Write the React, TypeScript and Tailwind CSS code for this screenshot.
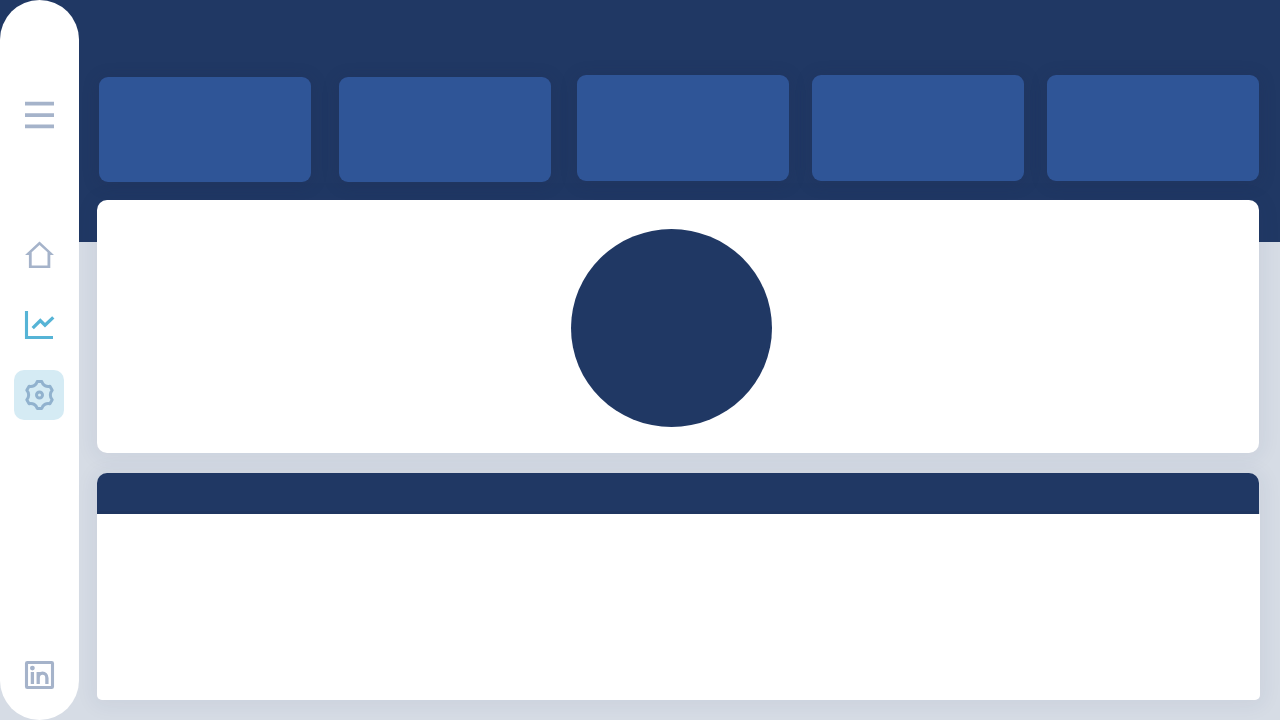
import type { ReactNode } from "react";

function NavButton({ label, className = "", children }: { label: string; className?: string; children: ReactNode }) {
  return (
    <button type="button" aria-label={label} className={`size-[50px] rounded-[10px] p-2.5 ${className}`}>
      <svg viewBox="0 0 30 30" className="block size-full overflow-visible" fill="none" aria-hidden="true">
        {children}
      </svg>
    </button>
  );
}

function Sidebar() {
  return (
    <nav className="flex w-[79px] shrink-0 flex-col rounded-[40px] bg-white pt-[90px] pb-5 pl-3.5 text-[#a5b3ca]">
      <NavButton label="Menu">
        <path d="M1 3.6h29M1 15.1h29M1 26.4h29" stroke="currentColor" strokeWidth="3.6" />
      </NavButton>
      <div className="mt-[90px] flex flex-col gap-5">
        <NavButton label="Home">
          <path
            fill="currentColor"
            fillRule="evenodd"
            d="M15.5 1.6 30 15H26.3V28.1H4.9V15H1ZM15.5 5.1 7.7 12.3V25.4H23.5V12.3Z"
          />
        </NavButton>
        <NavButton label="Analytics" className="text-[#56b4d6]">
          <path d="M2.5 1v26.5H29" stroke="currentColor" strokeWidth="3.1" />
          <path d="M8.7 18.2 16.3 10.6 21 15.2 29.3 7.4" stroke="currentColor" strokeWidth="3.3" />
        </NavButton>
        <NavButton label="Settings" className="bg-[#d5ebf4] text-[#91b2ce]">
          <g transform="translate(15.5 15)" stroke="currentColor" strokeWidth="3" strokeLinejoin="round">
            <path d="M-2.3-13.4H2.3C3.2-9.9 6.8-7.8 10.4-8.7L12.7-4.7C10.2-2.1 10.2 2.1 12.7 4.7L10.4 8.7C6.8 7.8 3.2 9.9 2.3 13.4H-2.3C-3.2 9.9-6.8 7.8-10.4 8.7L-12.7 4.7C-10.2 2.1-10.2-2.1-12.7-4.7L-10.4-8.7C-6.8-7.8-3.2-9.9-2.3-13.4Z" />
            <circle r="3" />
          </g>
        </NavButton>
      </div>
      <NavButton label="LinkedIn" className="mt-auto">
        <rect x="2.5" y="2.5" width="26" height="25" rx="0.8" stroke="currentColor" strokeWidth="3.1" />
        <circle cx="8.4" cy="8.1" r="2.4" fill="currentColor" />
        <path d="M8.4 12V24M14.2 12V24M14.2 18C14.2 11.6 22.9 11.6 22.9 18V24" stroke="currentColor" strokeWidth="3.3" />
      </NavButton>
    </nav>
  );
}

function StatCard() {
  return <div className="flex-1 rounded-[9px] bg-[#2f5597] shadow-[0_2px_16px_rgba(32,45,85,0.3)]" />;
}

export default function App() {
  return (
    <div className="flex min-h-screen bg-[linear-gradient(#203864_242px,#d6dce5_242px)]">
      <Sidebar />
      <main className="flex min-w-0 flex-1 flex-col pt-[75px] pr-5 pb-5 pl-[18px]">
        <section aria-label="Key figures" className="mr-px grid h-[107px] grid-cols-[452fr_682fr] gap-[26px] pl-0.5">
          <div className="flex gap-7 pt-0.5">
            <StatCard />
            <StatCard />
          </div>
          <div className="flex gap-[23px] pb-px">
            <StatCard />
            <StatCard />
            <StatCard />
          </div>
        </section>
        <section
          aria-label="Overview"
          className="mt-[18px] mr-px flex h-[253px] items-center justify-center rounded-[10px] bg-white pt-0.5 pr-3.5 shadow-[0_2px_20px_4px_rgba(32,56,100,0.06)]"
        >
          <div className="h-[198px] w-[201px] rounded-[50%] bg-[#203864]" />
        </section>
        <section
          aria-label="Details"
          className="mt-5 flex flex-1 flex-col rounded-t-[10px] rounded-b-[5px] shadow-[0_2px_20px_4px_rgba(32,56,100,0.06)]"
        >
          <header className="mr-px h-[41px] rounded-t-[10px] border-b-3 border-[#1f3660] bg-[#203864]" />
          <div className="flex-1 rounded-b-[5px] bg-white" />
        </section>
      </main>
    </div>
  );
}
